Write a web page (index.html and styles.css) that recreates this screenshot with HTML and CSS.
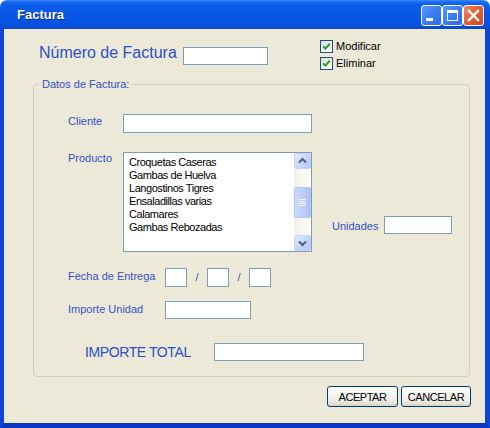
FILE: index.html
```html
<!DOCTYPE html>
<html lang="es">
<head>
<meta charset="utf-8">
<title>Factura</title>
<link rel="stylesheet" href="styles.css">
</head>
<body>
<div class="window">
  <div class="titlebar">
    <span class="title">Factura</span>
    <div class="tbtns">
      <span class="tbtn min"><span class="min-bar"></span></span>
      <span class="tbtn max"><span class="max-box"></span></span>
      <span class="tbtn close"><svg width="19" height="19" viewBox="0 0 19 19"><path d="M5 5 L14 14 M14 5 L5 14" stroke="#fff" stroke-width="2.4" stroke-linecap="square"/></svg></span>
    </div>
  </div>
  <div class="frame">
    <div class="top">
      <span class="num-label">Número de Factura</span>
      <span class="input num-input"></span>
      <div class="checks">
        <div class="check"><span class="cb"><svg width="11" height="11" viewBox="0 0 11 11"><path d="M2.2 5.2 L4.4 7.6 L8.8 2.8" fill="none" stroke="#21A121" stroke-width="2"/></svg></span><span>Modificar</span></div>
        <div class="check"><span class="cb"><svg width="11" height="11" viewBox="0 0 11 11"><path d="M2.2 5.2 L4.4 7.6 L8.8 2.8" fill="none" stroke="#21A121" stroke-width="2"/></svg></span><span>Eliminar</span></div>
      </div>
    </div>
    <fieldset class="group">
      <legend>Datos de Factura:</legend>
      <div class="group-body">
        <div class="row row-cliente">
          <span class="lbl lbl-short">Cliente</span>
          <span class="input in-cliente"></span>
        </div>
        <div class="row row-producto">
          <span class="lbl lbl-short lbl-prod">Producto</span>
          <div class="listbox">
            <ul class="items">
              <li>Croquetas Caseras</li>
              <li>Gambas de Huelva</li>
              <li>Langostinos Tigres</li>
              <li>Ensaladillas varias</li>
              <li>Calamares</li>
              <li>Gambas Rebozadas</li>
            </ul>
            <div class="scrollbar">
              <span class="sbtn"><svg width="15" height="14" viewBox="0 0 15 14"><path d="M4 8.5 L7.5 5 L11 8.5" fill="none" stroke="#4D6185" stroke-width="2"/></svg></span>
              <div class="track">
                <span class="thumb"><span class="grip"></span><span class="grip"></span><span class="grip"></span><span class="grip"></span></span>
              </div>
              <span class="sbtn"><svg width="15" height="14" viewBox="0 0 15 14"><path d="M4 5.5 L7.5 9 L11 5.5" fill="none" stroke="#4D6185" stroke-width="2"/></svg></span>
            </div>
          </div>
          <div class="unidades">
            <span class="lbl lbl-uni">Unidades</span>
            <span class="input in-uni"></span>
          </div>
        </div>
        <div class="row row-fecha">
          <span class="lbl lbl-long">Fecha de Entrega</span>
          <span class="input in-date"></span>
          <span class="slash">/</span>
          <span class="input in-date"></span>
          <span class="slash">/</span>
          <span class="input in-date"></span>
        </div>
        <div class="row row-importe">
          <span class="lbl lbl-long">Importe Unidad</span>
          <span class="input in-importe"></span>
        </div>
        <div class="row row-total">
          <span class="lbl-total">IMPORTE TOTAL</span>
          <span class="input in-total"></span>
        </div>
      </div>
    </fieldset>
    <div class="actions">
      <button class="btn btn-ok">ACEPTAR</button>
      <button class="btn btn-cancel">CANCELAR</button>
    </div>
  </div>
</div>
</body>
</html>
```

FILE: styles.css
```css
* { box-sizing: border-box; }
html, body { margin: 0; padding: 0; background: #ffffff; }
body { font-family: "Liberation Sans", Arial, sans-serif; font-size: 11px; }

.window {
  width: 490px;
  height: 428px;
  display: flex;
  flex-direction: column;
}

.titlebar {
  height: 29px;
  flex: none;
  display: flex;
  align-items: center;
  justify-content: space-between;
  padding: 1px 6px 0 17px;
  border-radius: 7px 7px 0 0;
  background: linear-gradient(to bottom, #3D8BF7 0px, #1A6AF2 2px, #0B5DEC 5px, #0757E6 14px, #0654E4 22px, #0A4ED8 26px, #0A46CC 29px);
}
.title {
  color: #ffffff;
  font-weight: bold;
  font-size: 13px;
  line-height: 16px;
  text-shadow: 1px 1px 0 #0A2A8C;
}
.tbtns { display: flex; gap: 0; }
.tbtn {
  width: 21px;
  height: 21px;
  border: 1px solid #ffffff;
  border-radius: 3px;
  display: flex;
  align-items: center;
  justify-content: center;
  position: relative;
  background: linear-gradient(135deg, #5C9BFF 0%, #3C7FF5 45%, #2B6AEB 100%);
}
.tbtn.min, .tbtn.max { margin-right: 0; }
.min-bar {
  position: absolute;
  left: 4px;
  bottom: 4px;
  width: 7px;
  height: 3px;
  background: #ffffff;
}
.max-box {
  width: 11px;
  height: 11px;
  border: 1px solid #ffffff;
  border-top-width: 3px;
}
.tbtn.close {
  background: linear-gradient(135deg, #F08A6A 0%, #E2613B 45%, #CF4A22 100%);
}

.frame {
  flex: 1;
  display: flex;
  flex-direction: column;
  background: #ECE9D8;
  border-left: 4px solid #0B45D9;
  border-right: 5px solid #0B45D9;
  border-bottom: 5px solid #0836C9;
}

.input {
  display: block;
  flex: none;
  background: #ffffff;
  border: 1px solid #7F9DB9;
}

.top {
  height: 49px;
  flex: none;
  display: flex;
  align-items: flex-start;
}
.num-label {
  margin: 15px 0 0 35px;
  width: 144px;
  flex: none;
  white-space: nowrap;
  font-size: 16px;
  line-height: 18px;
  color: #2D4EC8;
}
.num-input { width: 85px; height: 18px; margin-top: 18px; }
.checks {
  margin: 11px 0 0 52px;
  display: flex;
  flex-direction: column;
  gap: 4px;
}
.check {
  display: flex;
  align-items: center;
  gap: 3px;
  height: 13px;
  color: #000000;
  font-size: 11px;
  line-height: 13px;
}
.cb {
  width: 13px;
  height: 13px;
  border: 1px solid #1C5180;
  background: linear-gradient(135deg, #DCDCD7 0%, #F4F4F0 60%, #FFFFFF 100%);
  display: flex;
}

.group {
  margin: 0 15px 0 29px;
  padding: 0;
  border: 1px solid #D0D0BF;
  border-radius: 4px;
  min-width: 0;
}
.group legend {
  margin-left: 5px;
  padding: 0 3px;
  font-size: 11px;
  line-height: 13px;
  color: #2D4EC8;
}
.group-body { padding: 0 0 15px 34px; }

.row { display: flex; align-items: flex-start; }
.lbl { flex: none; color: #3252C8; font-size: 11px; line-height: 13px; white-space: nowrap; }
.lbl-short { width: 55px; }
.lbl-long { width: 97px; padding-top: 2px; }

.row-cliente { margin-top: 23px; }
.row-cliente .lbl { padding-top: 1px; }
.in-cliente { width: 189px; height: 19px; }

.row-producto { margin-top: 19px; }
.listbox {
  width: 189px;
  height: 100px;
  flex: none;
  border: 1px solid #7F9DB9;
  background: #ffffff;
  display: flex;
}
.items {
  flex: 1;
  margin: 0;
  padding: 3px 0 0 5px;
  list-style: none;
  color: #000000;
  font-size: 11px;
  line-height: 13px;
  letter-spacing: -0.45px;
}
.scrollbar {
  width: 17px;
  flex: none;
  display: flex;
  flex-direction: column;
  background: linear-gradient(to right, #F3F1EA, #FEFEFB);
}
.sbtn {
  height: 16px;
  flex: none;
  display: flex;
  align-items: center;
  justify-content: center;
  border: 1px solid #C3D3FD;
  border-radius: 2px;
  background: linear-gradient(135deg, #E3ECFF 0%, #C8D8FC 50%, #B4C8F6 100%);
}
.track {
  flex: 1;
  padding-top: 18px;
  display: flex;
  flex-direction: column;
}
.thumb {
  height: 31px;
  display: flex;
  flex-direction: column;
  align-items: center;
  justify-content: center;
  gap: 1px;
  border: 1px solid #B2C7F5;
  border-radius: 2px;
  background: linear-gradient(to right, #C9D9FD 0%, #BACDFA 60%, #A9BFF3 100%);
}
.grip { width: 7px; height: 1px; background: #EEF3FF; }

.unidades {
  margin: 64px 0 0 20px;
  display: flex;
  align-items: flex-start;
}
.lbl-uni { width: 52px; padding-top: 4px; }
.in-uni { width: 68px; height: 18px; }

.row-fecha { margin-top: 16px; }
.in-date { width: 22px; height: 19px; }
.slash {
  width: 20px;
  flex: none;
  text-align: center;
  padding-top: 3px;
  font-size: 11px;
  line-height: 13px;
  color: #3252C8;
}

.row-importe { margin-top: 14px; }
.in-importe { width: 86px; height: 18px; }

.row-total { margin-top: 24px; }
.lbl-total {
  margin-left: 17px;
  width: 129px;
  flex: none;
  padding-top: 1px;
  white-space: nowrap;
  font-size: 14px;
  line-height: 16px;
  letter-spacing: -0.4px;
  color: #2D4EC8;
}
.in-total { width: 150px; height: 18px; }

.actions {
  margin-top: 9px;
  padding-right: 14px;
  display: flex;
  justify-content: flex-end;
  gap: 3px;
}
.btn {
  height: 21px;
  padding: 0;
  border: 1px solid #003C74;
  border-radius: 3px;
  background: linear-gradient(to bottom, #FFFFFF 0%, #F6F5F1 40%, #ECEBE4 75%, #D8D3C6 100%);
  font-family: "Liberation Sans", Arial, sans-serif;
  font-size: 11px;
  letter-spacing: -0.45px;
  color: #000000;
}
.btn-ok { width: 71px; }
.btn-cancel { width: 70px; }
```
